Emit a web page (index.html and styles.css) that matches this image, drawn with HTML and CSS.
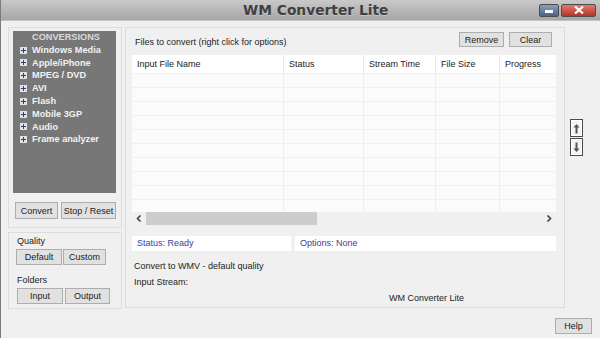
FILE: index.html
```html
<!DOCTYPE html>
<html lang="en">
<head>
    <meta charset="UTF-8">
    <title>WM Converter Lite</title>
    <link rel="stylesheet" href="styles.css">
</head>
<body>
<div class="window">
    <div class="titlebar">
        <span class="title">WM Converter Lite</span>
        <div class="win-buttons">
            <span class="win-btn minimize"><span class="bar"></span></span>
            <span class="win-btn close">
                <svg width="10" height="8" viewBox="0 0 10 8"><path d="M1 0.5 L9 7.5 M9 0.5 L1 7.5" stroke="#fff" stroke-width="2.2"/></svg>
            </span>
        </div>
    </div>

    <div class="content">
        <div class="left-col">
            <div class="conv-box">
                <div class="menu">
                    <div class="menu-head">CONVERSIONS</div>
                    <div class="menu-item"><span class="plus"></span>Windows Media</div>
                    <div class="menu-item"><span class="plus"></span>Apple/iPhone</div>
                    <div class="menu-item"><span class="plus"></span>MPEG / DVD</div>
                    <div class="menu-item"><span class="plus"></span>AVI</div>
                    <div class="menu-item"><span class="plus"></span>Flash</div>
                    <div class="menu-item"><span class="plus"></span>Mobile 3GP</div>
                    <div class="menu-item"><span class="plus"></span>Audio</div>
                    <div class="menu-item"><span class="plus"></span>Frame analyzer</div>
                </div>
                <div class="btn-row conv-btns">
                    <button class="btn w-convert">Convert</button>
                    <button class="btn w-stop">Stop / Reset</button>
                </div>
            </div>

            <div class="opts-box">
                <div class="opt-label">Quality</div>
                <div class="btn-row quality-btns">
                    <button class="btn w-default">Default</button>
                    <button class="btn w-custom">Custom</button>
                </div>
                <div class="opt-label folders">Folders</div>
                <div class="btn-row folder-btns">
                    <button class="btn w-input">Input</button>
                    <button class="btn w-output">Output</button>
                </div>
            </div>
        </div>

        <div class="main-panel">
            <div class="files-head">
                <span class="files-label">Files to convert (right click for options)</span>
                <div class="btn-row head-btns">
                    <button class="btn w-remove">Remove</button>
                    <button class="btn w-clear">Clear</button>
                </div>
            </div>

            <div class="file-table">
                <div class="row head">
                    <div class="cell">Input File Name</div>
                    <div class="cell">Status</div>
                    <div class="cell">Stream Time</div>
                    <div class="cell">File Size</div>
                    <div class="cell">Progress</div>
                </div>
                <div class="table-body">
                    <div class="row"><div class="cell"></div><div class="cell"></div><div class="cell"></div><div class="cell"></div><div class="cell"></div></div>
                    <div class="row"><div class="cell"></div><div class="cell"></div><div class="cell"></div><div class="cell"></div><div class="cell"></div></div>
                    <div class="row"><div class="cell"></div><div class="cell"></div><div class="cell"></div><div class="cell"></div><div class="cell"></div></div>
                    <div class="row"><div class="cell"></div><div class="cell"></div><div class="cell"></div><div class="cell"></div><div class="cell"></div></div>
                    <div class="row"><div class="cell"></div><div class="cell"></div><div class="cell"></div><div class="cell"></div><div class="cell"></div></div>
                    <div class="row"><div class="cell"></div><div class="cell"></div><div class="cell"></div><div class="cell"></div><div class="cell"></div></div>
                    <div class="row"><div class="cell"></div><div class="cell"></div><div class="cell"></div><div class="cell"></div><div class="cell"></div></div>
                    <div class="row"><div class="cell"></div><div class="cell"></div><div class="cell"></div><div class="cell"></div><div class="cell"></div></div>
                    <div class="row"><div class="cell"></div><div class="cell"></div><div class="cell"></div><div class="cell"></div><div class="cell"></div></div>
                    <div class="row"><div class="cell"></div><div class="cell"></div><div class="cell"></div><div class="cell"></div><div class="cell"></div></div>
                </div>
                <div class="hscroll">
                    <span class="arrow">
                        <svg width="6" height="7" viewBox="0 0 6 7"><path d="M4.5 0.5 L1.5 3.5 L4.5 6.5" fill="none" stroke="#444" stroke-width="1.6"/></svg>
                    </span>
                    <span class="thumb"></span>
                    <span class="track"></span>
                    <span class="arrow">
                        <svg width="6" height="7" viewBox="0 0 6 7"><path d="M1.5 0.5 L4.5 3.5 L1.5 6.5" fill="none" stroke="#444" stroke-width="1.6"/></svg>
                    </span>
                </div>
            </div>

            <div class="status-row">
                <div class="status-box status">Status: Ready</div>
                <div class="status-box options">Options: None</div>
            </div>

            <div class="info-line first">Convert to WMV - default quality</div>
            <div class="info-line">Input Stream:</div>
            <div class="info-line app-name">WM Converter Lite</div>
        </div>

        <div class="side-col">
            <button class="move-btn">
                <svg width="7" height="11" viewBox="0 0 7 11"><path d="M3.5 1 L0.5 4.5 H2.5 V10.5 H4.5 V4.5 H6.5 Z" fill="#555"/></svg>
            </button>
            <button class="move-btn">
                <svg width="7" height="11" viewBox="0 0 7 11"><path d="M3.5 10 L0.5 6.5 H2.5 V0.5 H4.5 V6.5 H6.5 Z" fill="#555"/></svg>
            </button>
        </div>
    </div>

    <div class="footer">
        <button class="btn w-help">Help</button>
    </div>
</div>
</body>
</html>
```

FILE: styles.css
```css
body {
    margin: 0;
    font-family: "Liberation Sans", Arial, sans-serif;
    font-size: 9px;
    color: #222;
    background-color: #f0f0f0;
}
.window {
    width: 600px;
    height: 338px;
    box-sizing: border-box;
    border-left: 1px solid #7c7c7c;
    display: flex;
    flex-direction: column;
    overflow: hidden;
}
.titlebar {
    height: 21px;
    display: flex;
    align-items: center;
    padding-right: 4px;
    background: linear-gradient(#c9c9c9, #a6a6a6);
    border-bottom: 1px solid #c4c4c4;
    box-sizing: border-box;
}
.title {
    margin-left: 242px;
    font-family: "DejaVu Sans", Verdana, sans-serif;
    font-size: 13.8px;
    font-weight: bold;
    color: #404040;
    text-shadow: 0 1px 0 rgba(255,255,255,0.3);
}
.win-buttons {
    margin-left: auto;
    display: flex;
    gap: 2px;
}
.win-btn {
    height: 11px;
    display: flex;
    align-items: center;
    justify-content: center;
    border: 1px solid #4d4d4d;
    border-radius: 2px;
}
.minimize {
    width: 18px;
    background: linear-gradient(#8aa1bd, #4a6283);
}
.minimize .bar {
    width: 8px;
    height: 3px;
    margin-top: 3px;
    background: #fff;
}
.close {
    width: 33px;
    background: linear-gradient(#e07a70, #b8322a);
}
.content {
    display: flex;
    padding: 6px 0 0 7px;
}
.left-col {
    width: 114px;
    margin-right: 3px;
}
.conv-box {
    height: 201px;
    box-sizing: border-box;
    border: 1px solid #dcdcdc;
    padding: 3px 4px 0 4px;
}
.menu {
    width: 103px;
    height: 162px;
    background-color: #777;
    box-sizing: border-box;
    padding-left: 7px;
    font-weight: bold;
    font-size: 9.2px;
    line-height: 12.8px;
}
.menu-head {
    padding-left: 12px;
    color: #dadada;
}
.menu-item {
    display: flex;
    align-items: center;
    color: #f2f2f2;
}
.plus {
    width: 7px;
    height: 7px;
    margin-right: 5px;
    background:
        linear-gradient(#2c3f84, #2c3f84) center / 5px 1px no-repeat,
        linear-gradient(#2c3f84, #2c3f84) center / 1px 5px no-repeat,
        #e2e2e2;
}
.btn-row {
    display: flex;
}
.btn {
    font-family: "Liberation Sans", Arial, sans-serif;
    font-size: 9px;
    color: #222;
    background-color: #e1e1e1;
    border: 1px solid #adadad;
    padding: 0;
    height: 17px;
    box-sizing: border-box;
}
.conv-btns {
    margin-top: 9px;
    padding-left: 2px;
    gap: 3px;
}
.w-convert { width: 43px; }
.w-stop { width: 55px; }
.opts-box {
    margin-top: 4px;
    height: 77px;
    box-sizing: border-box;
    border: 1px solid #dcdcdc;
    padding: 2px 0 0 7px;
}
.opt-label {
    line-height: 12px;
    padding-left: 1px;
}
.opt-label.folders {
    margin-top: 9px;
}
.quality-btns {
    margin-top: 2px;
    gap: 1px;
}
.quality-btns .btn,
.folder-btns .btn {
    height: 16px;
}
.w-default { width: 46px; }
.w-custom { width: 43px; }
.folder-btns {
    margin-top: 2px;
    margin-left: 1px;
    gap: 2px;
}
.w-input { width: 46px; }
.w-output { width: 45px; }
.main-panel {
    width: 440px;
    height: 281px;
    box-sizing: border-box;
    border: 1px solid #dcdcdc;
    padding: 4px 8px 0 6px;
}
.files-head {
    display: flex;
    justify-content: space-between;
    height: 16px;
}
.files-label {
    padding: 5px 0 0 3px;
}
.head-btns {
    gap: 5px;
    margin-right: 4px;
}
.head-btns .btn {
    height: 15px;
}
.w-remove { width: 45px; }
.w-clear { width: 43px; }
.file-table {
    margin-top: 7px;
    width: 424px;
}
.row {
    display: grid;
    grid-template-columns: 152px 80px 72px 64px 56px;
}
.row.head {
    height: 18px;
    background-color: #e8e8e8;
}
.row.head .cell {
    background-color: #fff;
    line-height: 18px;
    padding-left: 5px;
    margin-right: 1px;
}
.row.head .cell:last-child {
    margin-right: 0;
}
.table-body {
    height: 139px;
    overflow: hidden;
    background-color: #fbfbfb;
}
.table-body .row {
    height: 14px;
    box-sizing: border-box;
    border-top: 1px solid #efefef;
}
.table-body .cell {
    border-right: 1px solid #efefef;
}
.table-body .cell:last-child {
    border-right: none;
}
.hscroll {
    display: flex;
    height: 13px;
    background-color: #f0f0f0;
}
.arrow {
    width: 14px;
    display: flex;
    align-items: center;
    justify-content: center;
}
.thumb {
    width: 171px;
    background-color: #cdcdcd;
}
.track {
    flex: 1;
}
.status-row {
    display: flex;
    gap: 4px;
    margin-top: 11px;
}
.status-box {
    height: 15px;
    line-height: 15px;
    background-color: #fff;
    color: #3d3d9e;
    padding-left: 5px;
    box-sizing: border-box;
}
.status { width: 159px; }
.options { width: 261px; }
.info-line {
    line-height: 14px;
    margin-top: 2px;
    padding-left: 2px;
}
.info-line.first {
    margin-top: 8px;
}
.app-name {
    padding-left: 257px;
}
.side-col {
    display: flex;
    flex-direction: column;
    gap: 1px;
    padding: 92px 0 0 5px;
}
.move-btn {
    width: 13px;
    height: 18px;
    padding: 0;
    display: flex;
    align-items: center;
    justify-content: center;
    background-color: #f4f4f4;
    border: 1px solid #4a4a4a;
    box-shadow: inset 0 0 0 1px #fff;
}
.footer {
    display: flex;
    justify-content: flex-end;
    padding: 9px 8px 0 0;
}
.w-help {
    width: 37px;
    height: 16px;
}
```
